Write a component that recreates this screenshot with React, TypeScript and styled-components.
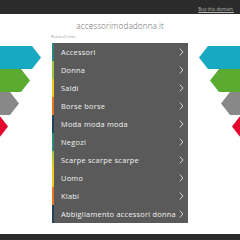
import styled, { createGlobalStyle } from "styled-components";

const GlobalStyle = createGlobalStyle`
  html, body {
    margin: 0;
    padding: 0;
    background: #ffffff;
  }
  body {
    font-family: "Open Sans", "Liberation Sans", sans-serif;
  }
`;

type LinkItem = { label: string; accent: string };

const links: LinkItem[] = [
  { label: "Accessori", accent: "#2a8282" },
  { label: "Donna", accent: "#9cc43c" },
  { label: "Saldi", accent: "#f0c81c" },
  { label: "Borse borse", accent: "#e8761e" },
  { label: "Moda moda moda", accent: "#1e4662" },
  { label: "Negozi", accent: "#2a8a78" },
  { label: "Scarpe scarpe scarpe", accent: "linear-gradient(#9cc43c, #f0c81c)" },
  { label: "Uomo", accent: "#f0c81c" },
  { label: "Klabi", accent: "#e8761e" },
  { label: "Abbigliamento accessori donna", accent: "#1e4662" },
];

const arrows = [
  { color: "#17a9c2", reach: 41 },
  { color: "#5aab2f", reach: 30 },
  { color: "#888888", reach: 19 },
  { color: "#e2062c", reach: 8 },
];

const Arrow = ({ color, reach, flip }: { color: string; reach: number; flip?: boolean }) => {
  const back = reach - 9;
  const pts = `0,0 ${back},0 ${reach},11.5 ${back},23 0,23`;
  return (
    <ArrowSvg width="52" height="23" viewBox="0 0 52 23" $flip={flip}>
      <polygon points={pts} fill={color} />
    </ArrowSvg>
  );
};

const Chevron = () => (
  <svg width="5" height="8" viewBox="0 0 5 8">
    <polyline points="0.8,0.6 4,4 0.8,7.4" fill="none" stroke="#e0e0e0" strokeWidth="0.9" />
  </svg>
);

const App = () => {
  return (
    <Page>
      <GlobalStyle />
      <TopBar>
        <BuyLink>Buy this domain.</BuyLink>
      </TopBar>
      <Main>
        <Side>
          {arrows.map((a) => (
            <Arrow key={a.color} color={a.color} reach={a.reach} />
          ))}
        </Side>
        <Center>
          <Domain>accessorimodadonna.it</Domain>
          <Related>Related Links</Related>
          <List>
            {links.map((l) => (
              <Row key={l.label} $accent={l.accent}>
                <RowText>{l.label}</RowText>
                <Chevron />
              </Row>
            ))}
          </List>
        </Center>
        <Side>
          {arrows.map((a) => (
            <Arrow key={a.color} color={a.color} reach={a.reach} flip />
          ))}
        </Side>
      </Main>
      <Footer />
    </Page>
  );
};

export default App;

const Page = styled.div`
  width: 240px;
  height: 240px;
  display: flex;
  flex-direction: column;
  overflow: hidden;
`;

const TopBar = styled.div`
  height: 14px;
  background: #2b2b2b;
  display: flex;
  align-items: flex-end;
  justify-content: flex-end;
  padding: 0 6px 2px 0;
  box-sizing: border-box;
`;

const BuyLink = styled.a`
  font-size: 4.6px;
  color: #b8b8b8;
  text-decoration: underline;
  line-height: 6px;
`;

const Main = styled.div`
  flex: 1;
  display: grid;
  grid-template-columns: 52px 136px 52px;
`;

const Side = styled.div`
  display: flex;
  flex-direction: column;
  padding-top: 32px;
`;

const ArrowSvg = styled.svg<{ $flip?: boolean }>`
  display: block;
  transform: ${(p) => (p.$flip ? "scaleX(-1)" : "none")};
`;

const Center = styled.div`
  display: flex;
  flex-direction: column;
`;

const Domain = styled.div`
  font-family: "Open Sans", "Liberation Sans", sans-serif;
  font-weight: 300;
  font-size: 8.4px;
  color: #707070;
  text-align: center;
  margin-top: 6px;
  line-height: 11px;
  white-space: nowrap;
`;

const Related = styled.div`
  font-size: 4px;
  color: #a0a0a0;
  line-height: 6px;
  margin-top: 3px;
  margin-left: -1px;
`;

const List = styled.div`
  margin-top: 3px;
  display: flex;
  flex-direction: column;
`;

const Row = styled.div<{ $accent: string }>`
  height: 18px;
  display: flex;
  align-items: center;
  justify-content: space-between;
  padding: 0 4px 0 9px;
  background: #5a5a5a;
  position: relative;
  box-sizing: border-box;

  &::before {
    content: "";
    position: absolute;
    left: 0;
    top: 0;
    bottom: 0;
    width: 2px;
    background: ${(p) => p.$accent};
  }
`;

const RowText = styled.span`
  font-size: 7.4px;
  letter-spacing: 0.25px;
  color: #f2f2f2;
  white-space: nowrap;
`;

const Footer = styled.div`
  height: 6px;
  background: #2b2b2b;
`;
